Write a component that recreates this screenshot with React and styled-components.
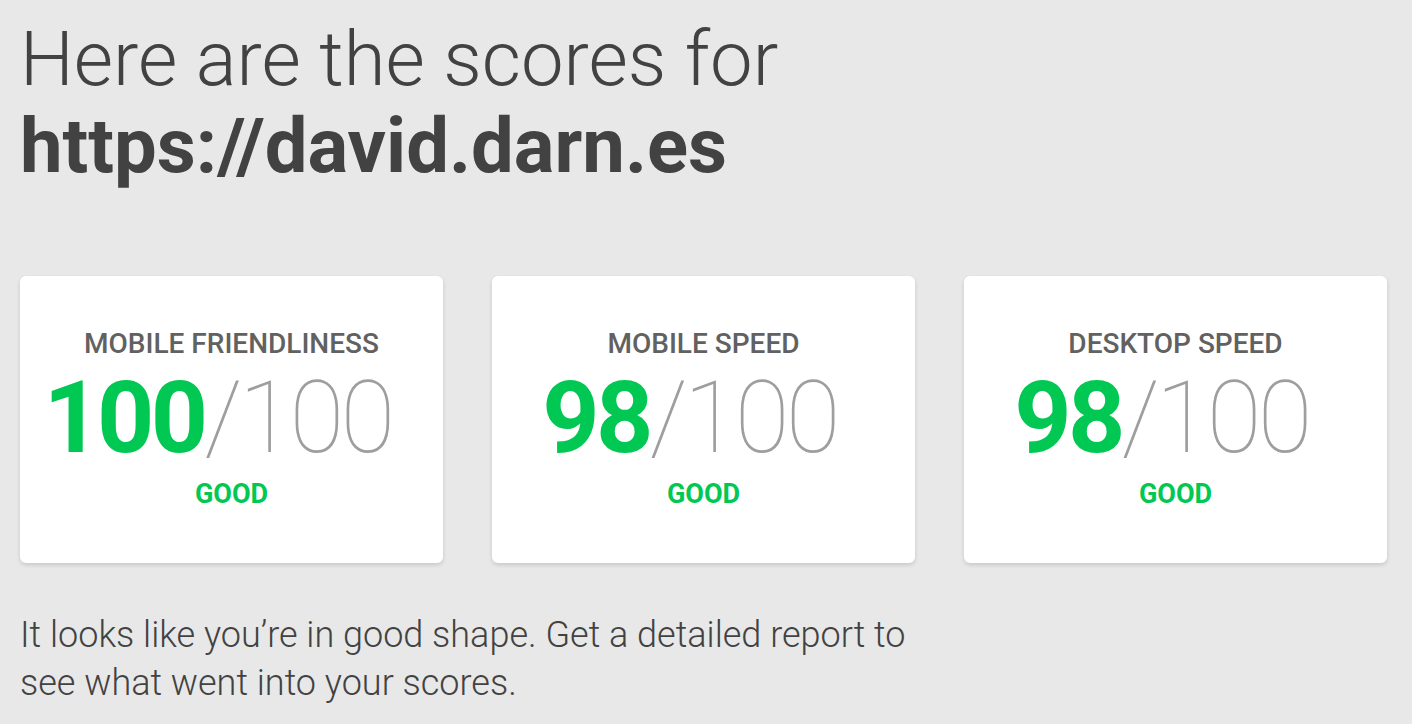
import React from 'react';
import styled, { createGlobalStyle } from 'styled-components';

const GlobalStyle = createGlobalStyle`
    html, body {
        margin: 0;
        padding: 0;
        background: #e8e8e8;
    }
    body {
        font-family: Roboto, "Noto Sans", "Liberation Sans", sans-serif;
        color: #424242;
    }
`;

const scores = [
    { title: 'Mobile Friendliness', score: 100 },
    { title: 'Mobile Speed', score: 98 },
    { title: 'Desktop Speed', score: 98 },
];

function App() {
    return (
        <>
            <GlobalStyle />
            <Page>
                <Heading>
                    Here are the scores for
                    <br />
                    <Url>https://david.darn.es</Url>
                </Heading>
                <CardsRow>
                    {scores.map((s) => (
                        <Card key={s.title}>
                            <CardTitle>{s.title}</CardTitle>
                            <Score>
                                <ScoreValue>{s.score}</ScoreValue>
                                <ScoreMax>/100</ScoreMax>
                            </Score>
                            <Rating>Good</Rating>
                        </Card>
                    ))}
                </CardsRow>
                <Summary>
                    It looks like you’re in good shape. Get a detailed report to
                    <br />
                    see what went into your scores.
                </Summary>
            </Page>
        </>
    );
}

export default App;

const Page = styled.div`
    padding: 16px 24px 0 20px;
`;

const Heading = styled.h1`
    margin: 0;
    font-size: 76px;
    line-height: 87px;
    font-weight: 300;
    color: #424242;
`;

const Url = styled.strong`
    font-weight: 700;
`;

const CardsRow = styled.div`
    display: grid;
    grid-template-columns: repeat(3, 423px);
    column-gap: 49px;
    margin-top: 86px;
`;

const Card = styled.div`
    background: #fff;
    border-radius: 6px;
    box-shadow: 0 2px 4px rgba(0, 0, 0, 0.14);
    padding: 54px 0 56px;
    display: flex;
    flex-direction: column;
    align-items: center;
`;

const CardTitle = styled.div`
    font-size: 28px;
    line-height: 28px;
    font-weight: 500;
    text-transform: uppercase;
    color: #616161;
`;

const Score = styled.div`
    margin-top: 9px;
    padding-right: 28px;
    font-size: 100px;
    line-height: 102px;
    letter-spacing: -3.8px;
    white-space: nowrap;
`;

const ScoreValue = styled.span`
    font-weight: 700;
    color: #00c853;
`;

const ScoreMax = styled.span`
    font-weight: 100;
    color: #9e9e9e;
`;

const Rating = styled.div`
    margin-top: 12px;
    font-size: 27px;
    line-height: 26px;
    font-weight: 700;
    text-transform: uppercase;
    color: #00c853;
`;

const Summary = styled.p`
    margin: 48px 0 0;
    font-size: 36px;
    line-height: 48px;
    font-weight: 300;
    color: #424242;
`;
